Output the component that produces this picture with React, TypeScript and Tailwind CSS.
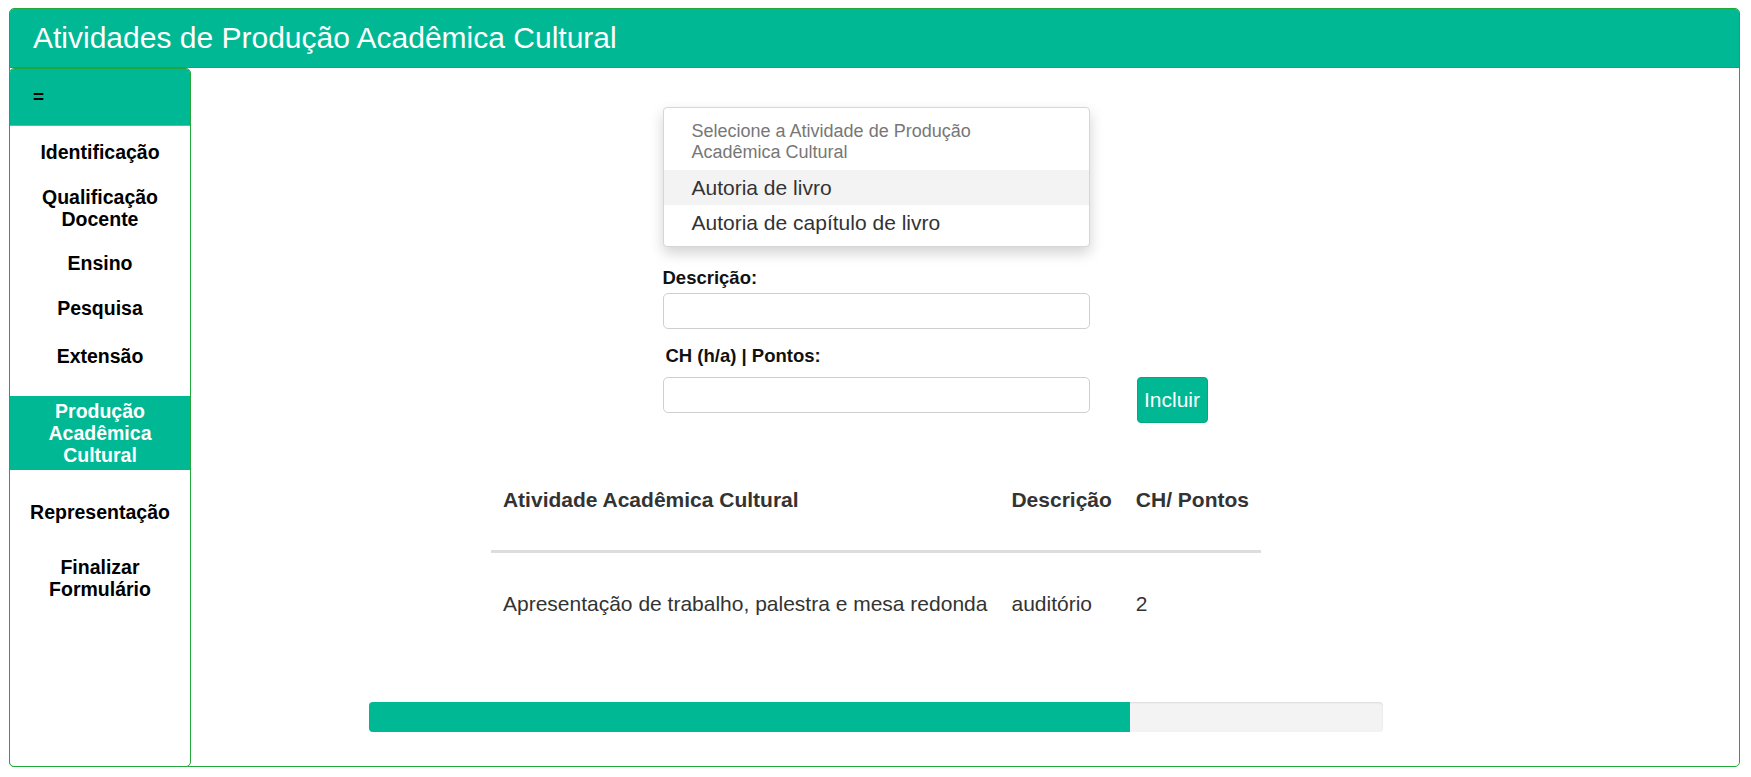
import React from "react";

const TEAL = "bg-[#00b894]";

const NAV_ITEMS: { label: string; space: string; active?: boolean }[] = [
  { label: "Identificação", space: "mt-[15px]" },
  { label: "Qualificação Docente", space: "mt-[23px]" },
  { label: "Ensino", space: "mt-[22px]" },
  { label: "Pesquisa", space: "mt-[23px]" },
  { label: "Extensão", space: "mt-[26px]" },
  { label: "Produção Acadêmica Cultural", space: "mt-[29px]", active: true },
  { label: "Representação", space: "mt-[31px]" },
  { label: "Finalizar Formulário", space: "mt-[33px]" },
];

const ROWS = [
  { atividade: "Apresentação de trabalho, palestra e mesa redonda", descricao: "auditório", ch: "2" },
];

function Sidebar() {
  return (
    <aside className="-mb-px -ml-px flex w-[182px] shrink-0 flex-col rounded-[5px] border border-[#22a83a] bg-white">
      {/* toggle */}
      <div className={`${TEAL} flex h-[57px] items-center rounded-t-[4px] border-b border-[#3fc9a6] pl-[23px] text-[19px] font-bold text-black`}>
        =
      </div>
      <nav className="flex flex-col">
        {NAV_ITEMS.map((item) => (
          <div
            key={item.label}
            className={`${item.space} px-[10px] text-center text-[19.5px] font-bold leading-[22px] ${
              item.active ? `${TEAL} py-[4px] leading-[21px] text-white` : "text-black"
            }`}
          >
            {item.label}
          </div>
        ))}
      </nav>
    </aside>
  );
}

function ActivityForm() {
  return (
    <div className="flex w-[427px] flex-col">
      {/* open select list */}
      <div className="rounded-[4px] border border-[#d6d6d6] bg-white py-[6px] shadow-[0_6px_14px_rgba(0,0,0,0.18)]">
        <div className="px-[28px] py-[7px] text-[18px] leading-[21px] text-[#777]">
          Selecione a Atividade de Produção Acadêmica Cultural
        </div>
        <div className="h-[35px] bg-[#f3f3f3] px-[28px] text-[21px] leading-[35px] text-[#333]">
          Autoria de livro
        </div>
        <div className="h-[35px] px-[28px] text-[21px] leading-[35px] text-[#333]">
          Autoria de capítulo de livro
        </div>
      </div>

      <label className="mt-[20px] text-[18.5px] font-bold leading-[22px] text-[#111]">Descrição:</label>
      <input className="mt-[4px] h-[36px] w-[427px] rounded-[5px] border border-[#cfcfcf] bg-white outline-none" />

      <label className="mt-[16px] pl-[3px] text-[18.5px] font-bold leading-[22px] text-[#111]">CH (h/a) | Pontos:</label>
      <div className="mt-[10px] flex items-start gap-[47px]">
        <input className="h-[36px] w-[427px] shrink-0 rounded-[5px] border border-[#cfcfcf] bg-white outline-none" />
        <button className={`${TEAL} h-[46px] w-[71px] shrink-0 rounded-[4px] border border-[#00a884] text-[21px] text-white`}>
          Incluir
        </button>
      </div>
    </div>
  );
}

function ActivityTable() {
  return (
    <table className="mt-[27px] border-collapse text-[21px] text-[#333]">
      <thead>
        <tr>
          <th className="whitespace-nowrap border-b-[3px] border-[#dddddd] px-[12px] py-[38px] text-left font-bold leading-[24px]">
            Atividade Acadêmica Cultural
          </th>
          <th className="whitespace-nowrap border-b-[3px] border-[#dddddd] px-[12px] py-[38px] text-left font-bold leading-[24px]">
            Descrição
          </th>
          <th className="whitespace-nowrap border-b-[3px] border-[#dddddd] px-[12px] py-[38px] text-left font-bold leading-[24px]">
            CH/ Pontos
          </th>
        </tr>
      </thead>
      <tbody>
        {ROWS.map((r) => (
          <tr key={r.atividade}>
            <td className="whitespace-nowrap px-[12px] py-[39px] leading-[24px]">{r.atividade}</td>
            <td className="whitespace-nowrap px-[12px] py-[39px] leading-[24px]">{r.descricao}</td>
            <td className="whitespace-nowrap px-[12px] py-[39px] leading-[24px]">{r.ch}</td>
          </tr>
        ))}
      </tbody>
    </table>
  );
}

export default function App() {
  const progress = 75;

  return (
    <div className="min-h-screen bg-white pl-[9px] pt-[8px] font-['Liberation_Sans',Arial,sans-serif]">
      <div className="flex h-[759px] w-[1731px] flex-col rounded-[5px] border border-[#22a83a]">
        {/* Header */}
        <header className={`${TEAL} flex h-[59px] shrink-0 items-center rounded-t-[4px] border-b border-[#22a83a] pl-[23px]`}>
          <h1 className="text-[30px] font-normal leading-none text-white">
            Atividades de Produção Acadêmica Cultural
          </h1>
        </header>

        <div className="flex flex-1">
          <Sidebar />

          {/* Main content */}
          <main className="flex flex-1 flex-col items-center pr-[178px] pt-[39px]">
            <ActivityForm />
            <ActivityTable />

            <div className="mt-[47px] h-[30px] w-[1014px] overflow-hidden rounded-[4px] bg-[#f3f3f3] shadow-[inset_0_1px_2px_rgba(0,0,0,0.1)]">
              <div className={`${TEAL} h-full`} style={{ width: `${progress}%` }} />
            </div>
          </main>
        </div>
      </div>
    </div>
  );
}
